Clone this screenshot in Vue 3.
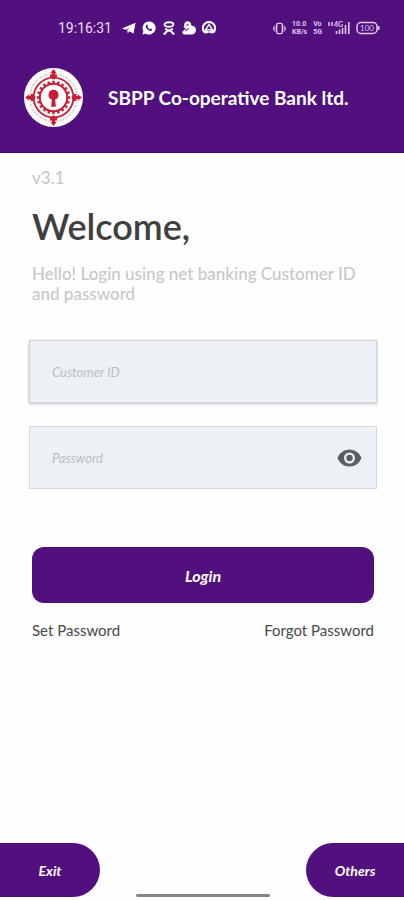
<script setup>
import { ref } from 'vue'

const customerId = ref('')
const password = ref('')
const showPassword = ref(false)

// teeth of the gear in the bank emblem
const teeth = Array.from({ length: 20 }, (_, i) => i * 18)
const arrows = [0, 90, 180, 270]
</script>

<template>
  <div class="screen">
    <header class="header">
      <div class="status">
        <div class="status__group">
          <span class="status__time">19:16:31</span>
          <div class="status__apps">
            <svg viewBox="0 0 16 16" class="status__icon">
              <path d="M0 8.500 15.500 2 13 14.500 8.800 11.700 6.500 14 6 10l4-3.500-5.500 3.500z" fill="#fff" />
            </svg>
            <svg viewBox="0 0 16 16" class="status__icon">
              <path d="M8 .5a7.500 7.500 0 1 1-3.600 14L.5 15.500l1-4A7.500 7.500 0 0 1 8 .5z" fill="#fff" />
              <path d="M5 4.200c.8-.6 1.400 0 1.800 1.500l-.6 1c.6 1.300 1.400 2.100 2.700 2.700l1-.7c1.600.5 2 1.100 1.400 1.900-1.200 1.200-3.300.6-5.200-1.200S3.700 5.500 5 4.200z" fill="#52107f" />
            </svg>
            <svg viewBox="0 0 16 16" class="status__icon">
              <ellipse cx="8" cy="4" rx="5" ry="2.500" fill="none" stroke="#fff" stroke-width="2.200" />
              <path d="M2 15.500 6.500 11h3l4.500 4.500M3.500 9 8 11l4.500-2" fill="none" stroke="#fff" stroke-width="2.400" />
            </svg>
            <svg viewBox="0 0 16 16" class="status__icon">
              <path d="M2.500 4.500C2.500 1.500 5 0 7.500.5c2.500.5 3.500 2.500 3 5 3-.3 5.500 1.700 5.500 4.700 0 3-2 5.300-5 5.300H2.500C.2 15.500-.5 12.500 1.500 11l3-2.500-2.500-1z" fill="#fff" />
              <path d="M4.500 5l3-1M4 11.500l3.500-3" stroke="#52107f" stroke-width="1.200" />
            </svg>
            <svg viewBox="0 0 16 16" class="status__icon">
              <path d="M3.500 13.500a7 7 0 1 1 9 0" fill="none" stroke="#fff" stroke-width="2.400" />
              <path d="M8 4l4 6H4z" fill="none" stroke="#fff" stroke-width="1.600" />
              <path d="M1.500 10.500h4L8 12l2.500-1.500h4l-3 4L8 13l-3.500 1.500z" fill="#fff" />
            </svg>
          </div>
        </div>
        <div class="status__group status__group--right">
          <svg viewBox="0 0 14 14" class="status__vibrate">
            <rect x="4" y="1.500" width="6" height="11" rx="1.500" fill="none" stroke="#dcc9ea" stroke-width="1.500" />
            <path d="M2 3.500v7M12 3.500v7M.6 5.500v3M13.400 5.500v3" stroke="#dcc9ea" />
          </svg>
          <span class="status__stack"><b>10.0</b><b>KB/s</b></span>
          <span class="status__stack"><b>Vo</b><b>5G</b></span>
          <svg viewBox="0 0 22 14" class="status__signal">
            <path d="M1 1v4M4 1v4" stroke="#dcc9ea" stroke-width="1.500" />
            <text x="6" y="6" font-size="7" font-weight="700" fill="#dcc9ea">4G</text>
            <path d="M8.500 10v3M11.500 8.500V13M14.500 7v6M17.500 4v9M20.800 1v12" stroke="#dcc9ea" stroke-width="1.600" />
          </svg>
          <svg viewBox="0 0 24 14" class="status__battery">
            <rect x="1" y="1.500" width="20" height="11" rx="4" fill="none" stroke="#dcc9ea" stroke-width="1.500" />
            <path d="M22.500 5v4" stroke="#dcc9ea" stroke-width="2" />
            <text x="11" y="10" text-anchor="middle" font-size="8" fill="#dcc9ea">100</text>
          </svg>
        </div>
      </div>

      <div class="brand">
        <svg viewBox="0 0 58 58" class="brand__logo">
          <circle cx="29" cy="29" r="29" fill="#fff" />
          <circle
            cx="29"
            cy="29"
            r="23.500"
            fill="none"
            stroke="#c58d93"
            stroke-width="1.500"
            stroke-dasharray="1 1.200 2 1"
            opacity=".55"
          />
          <g fill="none" stroke="#c91f36">
            <circle cx="29" cy="29" r="19.500" stroke-width="1.800" />
            <circle cx="29" cy="29" r="13.500" stroke-width="2" />
            <path
              v-for="angle in teeth"
              :key="angle"
              d="M29 16v-3.500"
              stroke-width="2.400"
              :transform="`rotate(${angle} 29 29)`"
            />
          </g>
          <g fill="#c91f36">
            <path
              v-for="angle in arrows"
              :key="angle"
              d="M29 1l3 4h-1.500v1.500h2v2.500h-2v2h-3v-2h-2v-2.500h2V5H26z"
              :transform="`rotate(${angle} 29 29)`"
            />
            <circle cx="29" cy="26.500" r="5" />
            <path d="M27.500 30h3l.8 8h-4.600z" />
          </g>
        </svg>
        <span class="brand__name">SBPP Co-operative Bank ltd.</span>
      </div>
    </header>

    <main class="content">
      <p class="version">v3.1</p>
      <h1 class="title">Welcome,</h1>
      <p class="hint">Hello! Login using net banking Customer ID and password</p>

      <form class="form" @submit.prevent>
        <div class="field field--raised">
          <input v-model="customerId" class="field__input" type="text" placeholder="Customer ID" aria-label="Customer ID" />
        </div>
        <div class="field">
          <input
            v-model="password"
            class="field__input"
            :type="showPassword ? 'text' : 'password'"
            placeholder="Password"
            aria-label="Password"
          />
          <button type="button" class="field__eye" aria-label="Show password" @click="showPassword = !showPassword">
            <svg viewBox="0 0 24 18">
              <path
                d="M12 .5C6.500.5 2 4 0 9c2 5 6.500 8.500 12 8.500S22 14 24 9C22 4 17.500.5 12 .5zm0 14a5.500 5.500 0 1 1 0-11 5.500 5.500 0 0 1 0 11z"
                fill="#5c5f62"
              />
              <circle cx="12" cy="9" r="3.200" fill="#5c5f62" />
            </svg>
          </button>
        </div>
        <button type="submit" class="login">Login</button>
      </form>

      <nav class="links">
        <a href="#">Set Password</a>
        <a href="#">Forgot Password</a>
      </nav>
    </main>

    <footer class="footer">
      <button type="button" class="footer__btn footer__btn--left">Exit</button>
      <span class="footer__bar"></span>
      <button type="button" class="footer__btn footer__btn--right">Others</button>
    </footer>
  </div>
</template>

<style>
body {
  margin: 0;
  background: #fefefe;
}
</style>

<style scoped>
.screen {
  display: flex;
  flex-direction: column;
  min-height: 100vh;
  box-sizing: border-box;
  padding-bottom: 3px;
  font-family: Lato, 'Liberation Sans', sans-serif;
}

.header {
  background: #52107f;
  color: #fff;
  padding: 18px 24px 25px;
  border-bottom: 1px solid #3d0866;
}

.status {
  display: flex;
  justify-content: space-between;
  align-items: center;
  height: 20px;
  padding-left: 34px;
}

.status__group {
  display: flex;
  align-items: center;
  gap: 10px;
}

.status__group--right {
  gap: 6px;
  color: #dcc9ea;
}

.status__time {
  font-family: Roboto, sans-serif;
  font-size: 14px;
  color: #eadff2;
}

.status__apps {
  display: flex;
  gap: 6px;
}

.status__icon {
  width: 14px;
  height: 14px;
}

.status__vibrate {
  width: 13px;
  height: 13px;
}

.status__stack {
  display: flex;
  flex-direction: column;
  font-family: Roboto, sans-serif;
  font-size: 7px;
  line-height: 8px;
}

.status__signal {
  width: 22px;
  height: 14px;
}

.status__battery {
  width: 24px;
  height: 14px;
}

.brand {
  display: flex;
  align-items: center;
  gap: 25px;
  margin-top: 30px;
}

.brand__logo {
  width: 59px;
  height: 59px;
}

.brand__name {
  font-size: 19px;
  font-weight: 700;
}

.content {
  flex: 1;
  padding: 15px 27px 0 29px;
}

.version {
  margin: 0 3px;
  font-size: 17px;
  line-height: 20px;
  font-weight: 500;
  color: #c6c8ca;
}

.title {
  margin: 16px 3px 0;
  font-size: 36px;
  line-height: 44px;
  font-weight: 600;
  color: #3f3f41;
}

.hint {
  margin: 16px 3px 0;
  font-size: 17px;
  line-height: 20px;
  font-weight: 500;
  color: #c6c8ca;
}

.form {
  margin-top: 36px;
}

.field {
  display: flex;
  align-items: center;
  height: 61px;
  margin-bottom: 23px;
  padding: 0 14px 0 22px;
  background: #ecf1f5;
  border: 1px solid #d5d9de;
}

.field--raised {
  border-color: #d0d2da;
  box-shadow: 0 1px 3px rgba(60, 50, 80, 0.3);
}

.field__input {
  flex: 1;
  min-width: 0;
  padding: 0;
  border: 0;
  outline: 0;
  background: transparent;
  font-family: inherit;
  font-size: 13px;
  font-style: italic;
  color: #3f3f41;
}

.field__input::placeholder {
  color: #b9bec2;
  opacity: 1;
}

.field__eye {
  display: flex;
  padding: 0;
  border: 0;
  background: none;
}

.field__eye svg {
  width: 25px;
  height: 18px;
}

.login {
  display: block;
  width: calc(100% - 6px);
  height: 56px;
  margin: 58px 3px 0;
  border: 0;
  border-radius: 12px;
  background: #52107f;
  color: #fff;
  font-family: inherit;
  font-size: 16px;
  font-style: italic;
  font-weight: 700;
}

.links {
  display: flex;
  justify-content: space-between;
  margin: 17px 3px 0;
  font-size: 15px;
  line-height: 20px;
}

.links a {
  color: #48484a;
  text-decoration: none;
}

.footer {
  display: flex;
  justify-content: space-between;
  align-items: flex-end;
}

.footer__btn {
  height: 54px;
  border: 0;
  background: #52107f;
  color: #fff;
  font-family: inherit;
  font-size: 14px;
  font-style: italic;
  font-weight: 700;
}

.footer__btn--left {
  width: 100px;
  border-radius: 0 28px 28px 0;
}

.footer__btn--right {
  width: 98px;
  border-radius: 28px 0 0 28px;
}

.footer__bar {
  width: 134px;
  height: 3px;
  border-radius: 2px;
  background: #858585;
}
</style>
